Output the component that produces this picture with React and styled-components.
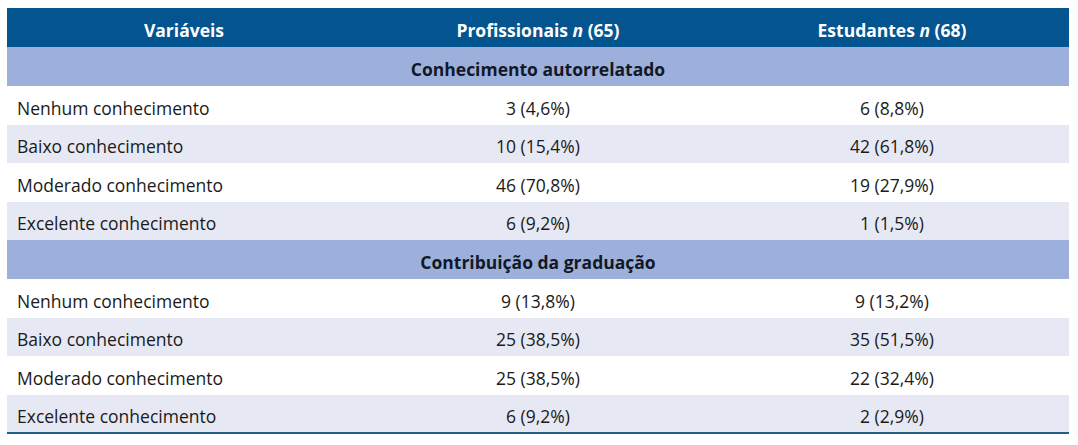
import React from "react";
import styled, { createGlobalStyle } from "styled-components";

const Global = createGlobalStyle`
  html, body { margin: 0; padding: 0; background: #fff; }
  body { font-family: "Open Sans", "Noto Sans", sans-serif; }
`;

const Wrap = styled.div`
  padding: 8px 9px 0 7px;
`;

const Table = styled.table`
  width: 1062px;
  border-collapse: collapse;
  table-layout: fixed;
  font-size: 17.5px;
  line-height: 22px;
  color: #1a1a1a;
  border-bottom: 2px solid #215e8f;
`;

const HeadCell = styled.th`
  box-sizing: border-box;
  background: #04558f;
  color: #fff;
  font-weight: 700;
  height: 39px;
  padding: 5px 0 0;
  text-align: center;
  vertical-align: middle;
`;

const GroupCell = styled.td`
  box-sizing: border-box;
  background: #9cb0db;
  color: #121826;
  font-weight: 700;
  height: 39px;
  padding: 5px 0 0;
  text-align: center;
`;

const Row = styled.tr`
  background: ${(p) => (p.$alt ? "#e6e9f4" : "#ffffff")};
`;

const Cell = styled.td`
  box-sizing: border-box;
  height: 38.5px;
  padding: 5px 0 0 ${(p) => (p.$label ? "10px" : "0")};
  text-align: ${(p) => (p.$label ? "left" : "center")};
  vertical-align: middle;
`;

const groups = [
  {
    title: "Conhecimento autorrelatado",
    rows: [
      ["Nenhum conhecimento", "3 (4,6%)", "6 (8,8%)"],
      ["Baixo conhecimento", "10 (15,4%)", "42 (61,8%)"],
      ["Moderado conhecimento", "46 (70,8%)", "19 (27,9%)"],
      ["Excelente conhecimento", "6 (9,2%)", "1 (1,5%)"],
    ],
  },
  {
    title: "Contribuição da graduação",
    rows: [
      ["Nenhum conhecimento", "9 (13,8%)", "9 (13,2%)"],
      ["Baixo conhecimento", "25 (38,5%)", "35 (51,5%)"],
      ["Moderado conhecimento", "25 (38,5%)", "22 (32,4%)"],
      ["Excelente conhecimento", "6 (9,2%)", "2 (2,9%)"],
    ],
  },
];

export default function App() {
  return (
    <>
      <Global />
      <Wrap>
        <Table>
          <thead>
            <tr>
              <HeadCell>Variáveis</HeadCell>
              <HeadCell>
                Profissionais <i>n</i> (65)
              </HeadCell>
              <HeadCell>
                Estudantes <i>n</i> (68)
              </HeadCell>
            </tr>
          </thead>
          <tbody>
            {groups.map((g) => (
              <React.Fragment key={g.title}>
                <tr>
                  <GroupCell colSpan={3}>{g.title}</GroupCell>
                </tr>
                {g.rows.map((r, i) => (
                  <Row key={r[0]} $alt={i % 2 === 1}>
                    <Cell $label>{r[0]}</Cell>
                    <Cell>{r[1]}</Cell>
                    <Cell>{r[2]}</Cell>
                  </Row>
                ))}
              </React.Fragment>
            ))}
          </tbody>
        </Table>
      </Wrap>
    </>
  );
}
